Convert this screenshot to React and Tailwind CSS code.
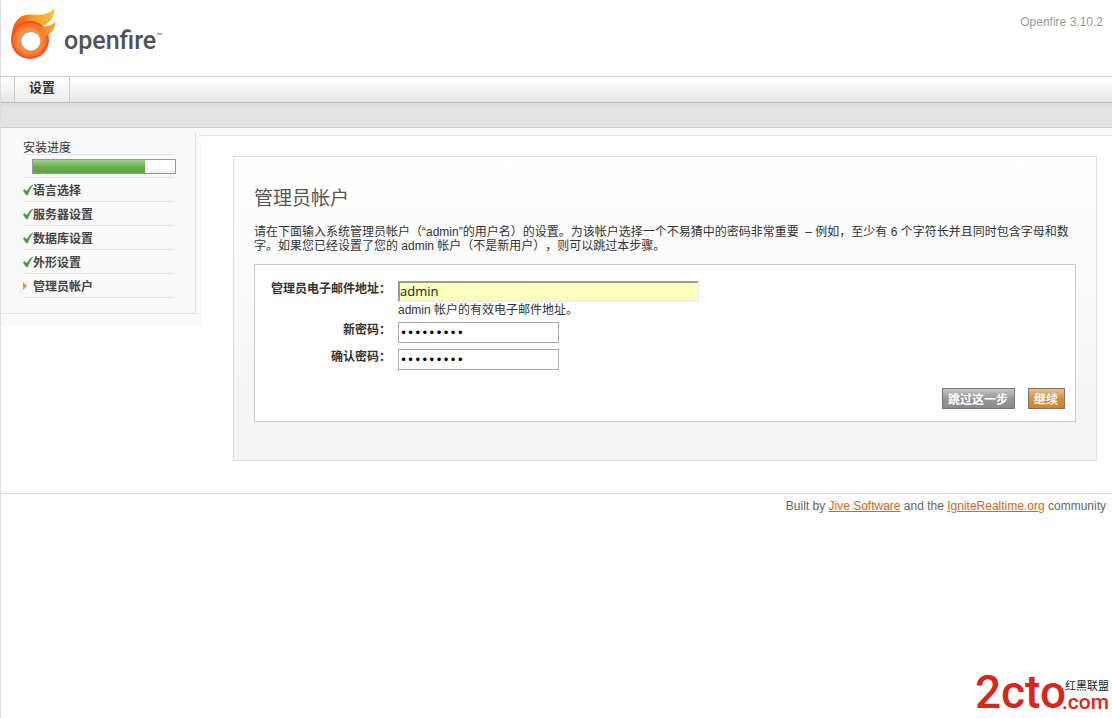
import React from "react";

const doneSteps = ["语言选择", "服务器设置", "数据库设置", "外形设置"];

function FlameLogo() {
  return (
    <svg viewBox="0 0 46 52" className="h-[52px] w-[46px]" aria-hidden="true">
      <defs>
        <linearGradient id="tail" gradientUnits="userSpaceOnUse" x1="2" y1="24" x2="43" y2="4">
          <stop offset="0" stopColor="#f4551f" />
          <stop offset="0.3" stopColor="#fb6d14" />
          <stop offset="0.6" stopColor="#fda428" />
          <stop offset="1" stopColor="#fdc03a" />
        </linearGradient>
        <radialGradient id="ring" gradientUnits="userSpaceOnUse" cx="19" cy="32" r="19">
          <stop offset="0.5" stopColor="#f8983a" />
          <stop offset="0.75" stopColor="#f57f30" />
          <stop offset="1" stopColor="#ee4a23" />
        </radialGradient>
        <linearGradient id="lick" gradientUnits="userSpaceOnUse" x1="14" y1="20" x2="44" y2="24">
          <stop offset="0" stopColor="#f4702c" />
          <stop offset="0.5" stopColor="#f4772c" />
          <stop offset="1" stopColor="#fbab38" />
        </linearGradient>
      </defs>
      <path
        d="M0.5 29C1 15 8 6.500 18 6.500C30 7.500 39 6.500 43.300 0C44 7 40 15 32 17.800C22 15 8 15 0.5 29Z"
        fill="url(#tail)"
      />
      <circle cx="19" cy="32" r="19" fill="url(#ring)" />
      <path
        d="M8 19C14 15.500 21 16 26 17.500C33 20 40 18.500 44.500 13.500C44 21 40 27 33.500 28.200C29 21 19 17 8 19Z"
        fill="url(#lick)"
      />
      <circle cx="18.800" cy="32.500" r="10" fill="#a9a9a9" />
      <circle cx="19.900" cy="33.200" r="9.300" fill="#fff" />
    </svg>
  );
}

function CheckMark() {
  return (
    <svg viewBox="0 0 10 12" className="h-3 w-[10px] shrink-0" aria-hidden="true">
      <path
        d="M0.300 6.500L2 5.600L3.600 7.600C5.200 5 7 2.600 9.900 0.800C7.700 4 6 7 4.500 10.800H3Z"
        fill="#3f9a35"
        stroke="#3f9a35"
        strokeWidth="0.500"
      />
    </svg>
  );
}

function Sidebar() {
  return (
    <aside className="w-[200px] shrink-0 bg-[#f9f9f9] pb-3">
      <div className="mt-1 w-[195px] border-b border-r border-[#e3e3e3] pb-[15px] pl-[22px] pt-2">
        <div className="w-[150px]">
          <h2 className="h-[15px] border-b border-[#e3e3e3] text-xs leading-4 text-[#333]">安装进度</h2>
          <div className="flex h-[23px] w-full border-b border-[#e3e3e3] pl-[9px] pt-1">
            <div
              role="progressbar"
              aria-label="安装进度"
              aria-valuenow={79}
              aria-valuemin={0}
              aria-valuemax={100}
              className="h-[15px] w-36 shrink-0 border border-[#999] bg-gradient-to-b from-white from-60% to-[#eee]"
            >
              <div className="h-full w-[79%] bg-gradient-to-b from-[#9fd08e] via-[#6bb04f] to-[#58a63c]" />
            </div>
          </div>
          <ul className="text-xs font-bold leading-[23px] text-[#444]">
            {doneSteps.map((step) => (
              <li key={step} className="flex h-6 items-center border-b border-[#e3e3e3]">
                <CheckMark />
                <span className="pt-[3px]">{step}</span>
              </li>
            ))}
            <li className="flex h-6 items-center border-b border-[#e3e3e3]">
              <svg viewBox="0 0 10 8" className="h-2 w-[10px] shrink-0" aria-hidden="true">
                <path d="M0 0L4 4L0 8Z" fill="#d9a010" />
              </svg>
              <span className="pt-[3px]">管理员帐户</span>
            </li>
          </ul>
        </div>
      </div>
    </aside>
  );
}

function SetupForm() {
  return (
    <form
      onSubmit={(e) => e.preventDefault()}
      className="mt-[11px] border border-[#ccc] bg-white px-[10px] pb-3 pt-4"
    >
      <div className="grid grid-cols-[126px_1fr] gap-x-[7px] text-xs">
        <label htmlFor="email" className="text-right font-bold leading-4">
          管理员电子邮件地址：
        </label>
        <div>
          <input
            id="email"
            type="text"
            defaultValue="admin"
            className="block h-[21px] w-[301px] border-2 border-b-[#eee] border-l-[#999] border-r-[#eee] border-t-[#999] bg-[#faffbd] pb-px font-['Open_Sans',sans-serif] text-[13px] leading-4 text-[#222]"
          />
          <p className="h-5 leading-4">admin 帐户的有效电子邮件地址。</p>
        </div>
        <label htmlFor="password" className="text-right font-bold leading-4">
          新密码：
        </label>
        <div className="h-[27px]">
          <input
            id="password"
            type="password"
            defaultValue="password1"
            className="block h-[21px] w-[161px] border border-[#a9a9a9] bg-white px-px font-['DejaVu_Sans',sans-serif] text-xs text-black"
          />
        </div>
        <label htmlFor="confirm" className="text-right font-bold leading-4">
          确认密码：
        </label>
        <div className="h-[27px]">
          <input
            id="confirm"
            type="password"
            defaultValue="password1"
            className="block h-[21px] w-[161px] border border-[#a9a9a9] bg-white px-px font-['DejaVu_Sans',sans-serif] text-xs text-black"
          />
        </div>
      </div>
      <div className="mt-3 flex justify-end gap-[13px] text-xs font-bold text-white">
        <button
          type="button"
          className="h-[21px] border border-[#777] bg-gradient-to-b from-[#c4c4c4] via-[#979797] to-[#8a8a8a] pl-[5px] pr-[6px] pt-[3px] leading-4"
        >
          跳过这一步
        </button>
        <button
          type="submit"
          className="h-[21px] border border-[#777] bg-gradient-to-b from-[#e8bd8b] via-[#d98f3a] to-[#d18220] pl-[5px] pr-[6px] pt-[3px] leading-4"
        >
          继续
        </button>
      </div>
    </form>
  );
}

export default function App() {
  return (
    <div className="flex min-h-screen flex-col border-l border-[#ddd] bg-white font-['Liberation_Sans','Noto_Sans_CJK_SC',sans-serif] text-xs text-[#333] [text-spacing-trim:space-all]">
      <header>
        <div className="flex h-[76px] items-start justify-between pl-[10px] pr-[9px]">
          <div className="flex items-start gap-[7px] pt-2">
            <FlameLogo />
            <div className="flex items-start pt-[14px] text-[#4b5558]">
              <span className="font-['Roboto',sans-serif] text-[25px] font-medium leading-[38px]">
                openfire
              </span>
              <span className="pt-2 text-[6px] font-bold leading-[10px]">™</span>
            </div>
          </div>
          <p className="pt-[15px] leading-[14px] text-[#999]">Openfire 3.10.2</p>
        </div>
        <nav className="flex h-[27px] border-y border-b-[#bbb] border-t-[#ccc] bg-gradient-to-b from-white to-[#e6e6e6] pl-[13px]">
          <a
            href="#setup"
            className="border-x border-[#ccc] bg-gradient-to-b from-white to-[#ececec] px-[14px] text-[13px] font-bold leading-[21px] text-[#333]"
          >
            设置
          </a>
        </nav>
        <div className="h-[25px] border-b border-[#ccc] bg-gradient-to-b from-[#dadada] to-[#e3e3e3] to-20%" />
      </header>

      <div className="flex items-start">
        <Sidebar />
        <main className="min-w-0 flex-1">
          <div className="-ml-1 bg-[#f9f9f9] pt-[7px]">
            <div className="h-[6px] rounded-tl border-l border-t border-[#e3e3e3] border-l-transparent bg-white" />
          </div>
          <div className="pb-8 pl-8 pr-[15px] pt-[15px]">
            <section className="border border-[#ddd] bg-gradient-to-b from-white to-[#f3f3f3] px-5 pb-[38px] pt-[30px]">
              <h1 className="text-[19px] leading-6 text-[#555]">管理员帐户</h1>
              <p className="mt-[14px] leading-[14px]">
                请在下面输入系统管理员帐户（“admin”的用户名）的设置。为该帐户选择一个不易猜中的密码非常重要&nbsp;
                – 例如，至少有 6 个字符长并且同时包含字母和数字。如果您已经设置了您的 admin
                帐户（不是新用户），则可以跳过本步骤。
              </p>
              <SetupForm />
            </section>
          </div>
        </main>
      </div>

      <footer className="border-t border-[#ddd] pr-[6px] pt-[5px] text-right leading-[14px] text-[#666]">
        Built by{" "}
        <a href="#jive" className="text-[#d2691e] underline">
          Jive Software
        </a>{" "}
        and the{" "}
        <a href="#ignite" className="text-[#d2691e] underline">
          IgniteRealtime.org
        </a>{" "}
        community
      </footer>

      <div className="mt-auto flex items-end justify-end pb-1 pr-[3px] text-[#d9261c]">
        <span className="font-['Roboto',sans-serif] text-[46px] font-medium leading-[44px]">2cto</span>
        <span className="-ml-1 flex flex-col items-end pb-[2px]">
          <span className="text-[11px] leading-3 text-[#222]">红黑联盟</span>
          <span className="font-['Roboto',sans-serif] text-[21px] font-medium leading-5">.com</span>
        </span>
      </div>
    </div>
  );
}
